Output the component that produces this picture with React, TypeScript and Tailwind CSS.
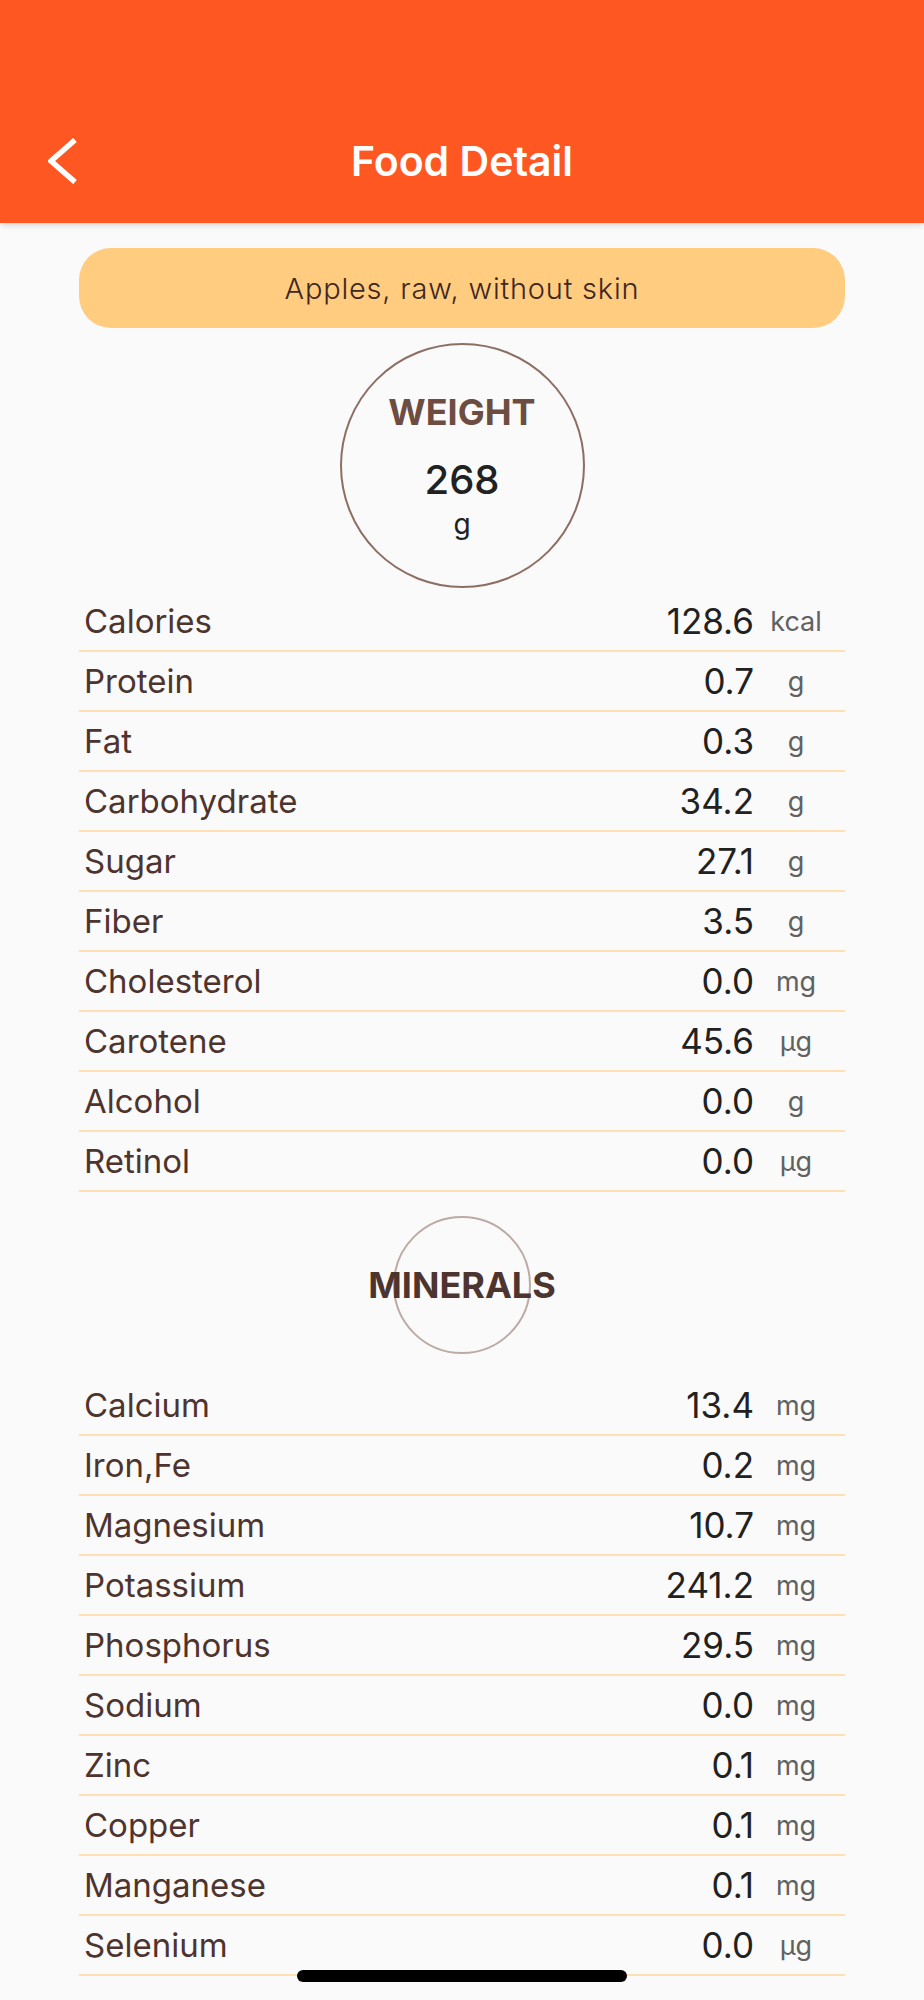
const nutrients = [
  { name: "Calories", value: "128.6", unit: "kcal" },
  { name: "Protein", value: "0.7", unit: "g" },
  { name: "Fat", value: "0.3", unit: "g" },
  { name: "Carbohydrate", value: "34.2", unit: "g" },
  { name: "Sugar", value: "27.1", unit: "g" },
  { name: "Fiber", value: "3.5", unit: "g" },
  { name: "Cholesterol", value: "0.0", unit: "mg" },
  { name: "Carotene", value: "45.6", unit: "µg" },
  { name: "Alcohol", value: "0.0", unit: "g" },
  { name: "Retinol", value: "0.0", unit: "µg" },
];

const minerals = [
  { name: "Calcium", value: "13.4", unit: "mg" },
  { name: "Iron,Fe", value: "0.2", unit: "mg" },
  { name: "Magnesium", value: "10.7", unit: "mg" },
  { name: "Potassium", value: "241.2", unit: "mg" },
  { name: "Phosphorus", value: "29.5", unit: "mg" },
  { name: "Sodium", value: "0.0", unit: "mg" },
  { name: "Zinc", value: "0.1", unit: "mg" },
  { name: "Copper", value: "0.1", unit: "mg" },
  { name: "Manganese", value: "0.1", unit: "mg" },
  { name: "Selenium", value: "0.0", unit: "µg" },
];

interface Row {
  name: string;
  value: string;
  unit: string;
}

function NutrientRow({ row }: { row: Row }) {
  return (
    <div className="flex items-center h-[60px] border-b-2 border-[#FFE0B2]">
      <span className="flex-1 pl-[5px] text-[33px] leading-none text-[#4E342E]">{row.name}</span>
      <span className="pr-[1px] text-[35px] leading-none text-[#212121] text-right">{row.value}</span>
      <span className="ml-[11px] mr-[19px] w-[60px] text-center text-[27px] leading-none text-[#616161]">
        {row.unit}
      </span>
    </div>
  );
}

export default function App() {
  return (
    <div className="relative min-h-[2000px] bg-[#FAFAFA] font-['Inter','Liberation_Sans',sans-serif]">
      {/* App bar */}
      <header className="h-[223px] bg-[#FF5722] shadow-md flex flex-col justify-end">
        <div className="grid grid-cols-[1fr_auto_1fr] items-center h-[124px]">
          <div className="pl-[48px] flex items-center">
            <svg width="30" height="46" viewBox="0 0 30 46" fill="none">
              <polyline points="27,2 3,23 27,44" stroke="white" strokeWidth="5.5" />
            </svg>
          </div>
          <h1 className="text-[41px] leading-none font-semibold text-white">Food Detail</h1>
          <div />
        </div>
      </header>

      <main className="w-[766px] mx-auto pt-[25px]">
        <div className="h-[80px] rounded-[32px] bg-[#FFCC80] flex items-center justify-center">
          <span className="text-[29px] leading-none font-light tracking-[0.8px] text-[#3E2723]">
            Apples, raw, without skin
          </span>
        </div>

        <div className="flex justify-center mt-[15px]">
          <div className="w-[245px] h-[245px] rounded-full border-2 border-[#8D6E63] flex flex-col items-center justify-center">
            <span className="text-[36px] leading-none font-bold text-[#6D4C41]">WEIGHT</span>
            <span className="mt-[30px] text-[40px] leading-none font-medium text-[#212121]">268</span>
            <span className="mt-[10px] text-[28px] leading-none text-[#212121]">g</span>
          </div>
        </div>

        <div className="mt-[4px]">
          {nutrients.map((row) => (
            <NutrientRow key={row.name} row={row} />
          ))}
        </div>

        <div className="flex justify-center mt-[24px]">
          <div className="w-[138px] h-[138px] rounded-full border-2 border-[#BCAAA4] flex items-center justify-center">
            <span className="whitespace-nowrap text-[36px] leading-none font-bold text-[#4E342E]">MINERALS</span>
          </div>
        </div>

        <div className="mt-[22px]">
          {minerals.map((row) => (
            <NutrientRow key={row.name} row={row} />
          ))}
        </div>
      </main>

      {/* home indicator */}
      <div className="absolute left-1/2 -translate-x-1/2 bottom-[18px] w-[330px] h-[12px] rounded-full bg-black" />
    </div>
  );
}
